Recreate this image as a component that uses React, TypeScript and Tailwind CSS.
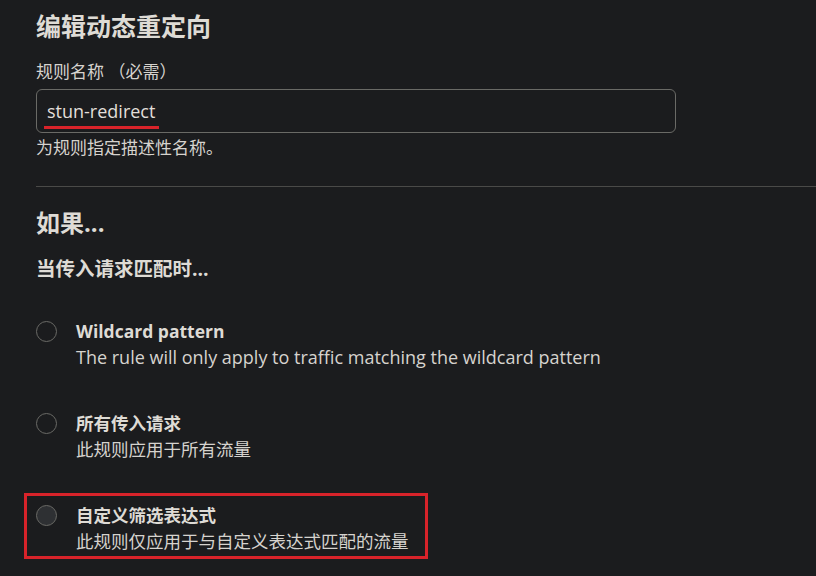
import React from "react";

const font = { fontFamily: '"Open Sans", "Noto Sans CJK SC", sans-serif' };

function Radio({ title, desc, selected, en }: { title: string; desc: string; selected?: boolean; en?: boolean }) {
  return (
    <div className="flex items-start">
      <div className="w-[40px] flex pt-[3px]">
        <div
          className={
            "w-[21px] h-[21px] rounded-full border border-[#6a6a66] " +
            (selected ? "bg-[#2e3033]" : "")
          }
        />
      </div>
      <div className="flex flex-col">
        <div className="text-[17.5px] leading-[26px] font-bold text-[#dedbd5]">{title}</div>
        <div className={(en ? "text-[18px]" : "text-[17.5px]") + " leading-[26px] text-[#d6d3ce]"}>{desc}</div>
      </div>
    </div>
  );
}

export default function App() {
  return (
    <div className="w-[816px] h-[576px] bg-[#1b1c1e] overflow-hidden pl-[36px] text-[#d6d3ce]" style={font}>
      <div className="pt-[8px] text-[25px] leading-[36px] font-bold text-[#dedbd5]">编辑动态重定向</div>
      <div className="mt-[16px] text-[17px] leading-[24px]">规则名称 （必需）</div>
      <div className="mt-[5px] w-[640px] h-[44px] rounded-[6px] border border-[#6a6a66] flex items-center px-[10px]">
        <span className="relative text-[18px] leading-[24px] text-[#e2dfda]">
          stun-redirect
          <span className="absolute left-[-3px] right-[-4px] bottom-[-6px] h-[3px] bg-[#d8232a]" />
        </span>
      </div>
      <div className="mt-[3px] text-[17px] leading-[24px]">为规则指定描述性名称。</div>
      <div className="mt-[26px] h-px bg-[#4a4a48]" />
      <div className="mt-[20px] text-[24px] leading-[32px] font-bold text-[#dedbd5]">如果...</div>
      <div className="mt-[17px] text-[19.5px] leading-[26px] font-bold text-[#dedbd5]">当传入请求匹配时...</div>
      <div className="mt-[36px] flex flex-col gap-[40px] relative">
        <Radio en title="Wildcard pattern" desc="The rule will only apply to traffic matching the wildcard pattern" />
        <Radio title="所有传入请求" desc="此规则应用于所有流量" />
        <div className="relative">
          <div className="absolute left-[-12px] top-[-9px] w-[404px] h-[66px] border-[3px] border-[#d8232a]" />
          <Radio title="自定义筛选表达式" desc="此规则仅应用于与自定义表达式匹配的流量" selected />
        </div>
      </div>
    </div>
  );
}
